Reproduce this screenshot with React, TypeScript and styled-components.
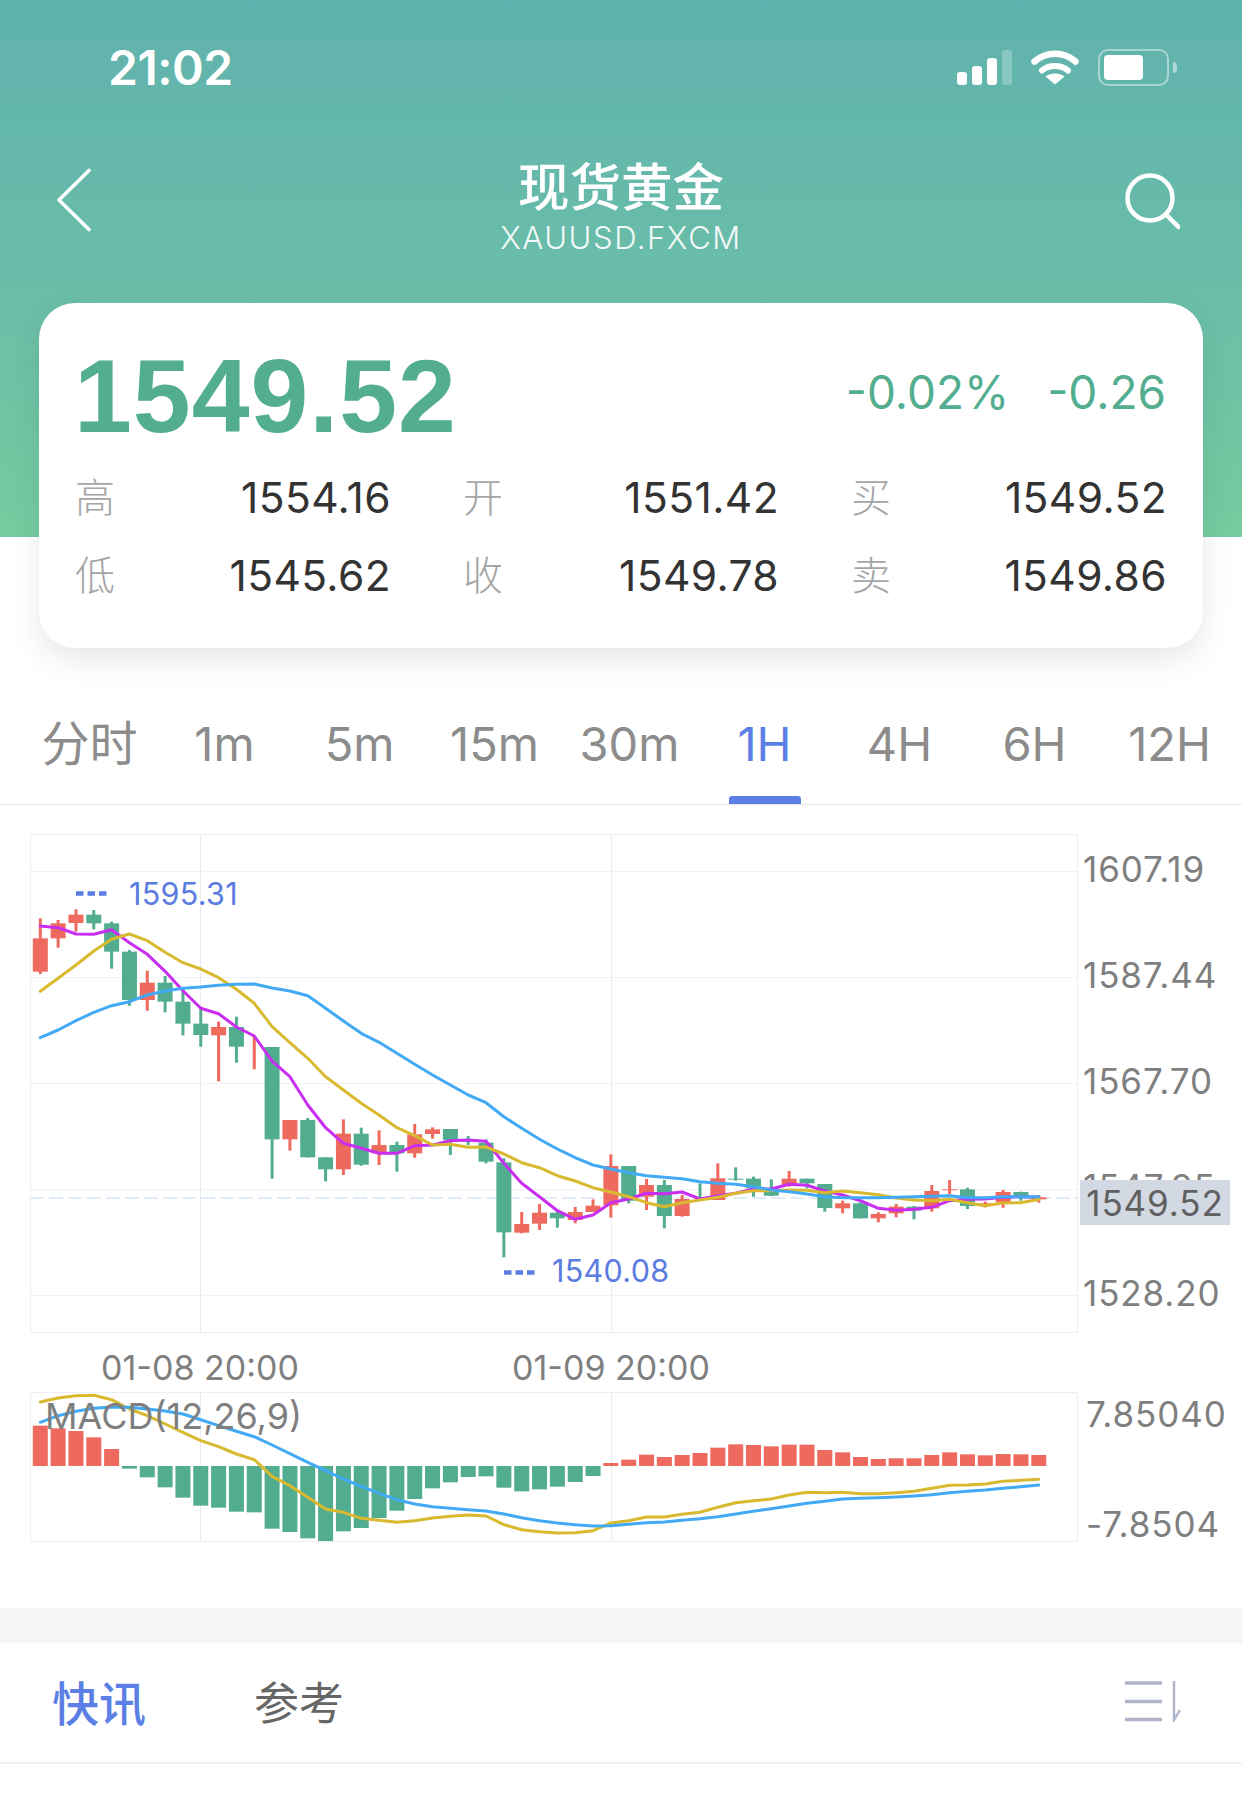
import React from 'react'
import styled, { createGlobalStyle } from 'styled-components'

const UP = '#ee6a5e'
const DOWN = '#51ac90'
const CANDLE_STEP = 17.83
const CANDLE_FIRST = 40.3

const candleX = (i: number) => CANDLE_FIRST + CANDLE_STEP * i

// [wick top, body top, body bottom, wick bottom, colour], read off the 3x crops
type Candle = [number, number, number, number, 'r' | 'g']

const CANDLES_A: Candle[] = [
  [265, 325, 425, 432, 'r'],
  [270, 280, 325, 353, 'r'],
  [238, 254, 279, 305, 'r'],
  [240, 254, 280, 298, 'g'],
  [275, 280, 365, 416, 'g'],
  [360, 365, 510, 527, 'g'],
  [422, 458, 510, 542, 'r'],
  [438, 458, 515, 547, 'g'],
  [475, 515, 581, 616, 'g'],
  [530, 581, 615, 650, 'g'],
  [575, 591, 616, 754, 'r'],
  [560, 591, 650, 698, 'g'],
  [618, 660, 660, 718, 'r'],
  [651, 651, 928, 1046, 'g'],
  [870, 870, 928, 962, 'r'],
  [864, 870, 982, 982, 'g'],
  [982, 982, 1018, 1054, 'g'],
  [868, 911, 1018, 1035, 'r'],
  [893, 911, 1004, 1007, 'g'],
  [901, 945, 970, 1005, 'r'],
  [935, 945, 970, 1025, 'g'],
  [882, 913, 970, 983, 'r'],
  [892, 898, 912, 926, 'r'],
]

const CANDLES_B: Candle[] = [
  [147, 147, 180, 225, 'g'],
  [168, 180, 185, 195, 'g'],
  [178, 188, 245, 250, 'g'],
  [235, 247, 457, 532, 'g'],
  [396, 432, 458, 460, 'r'],
  [372, 398, 431, 450, 'r'],
  [396, 398, 415, 443, 'g'],
  [381, 396, 420, 430, 'r'],
  [358, 377, 396, 396, 'r'],
  [223, 258, 376, 413, 'r'],
  [258, 258, 362, 370, 'g'],
  [297, 315, 350, 390, 'r'],
  [300, 315, 408, 445, 'g'],
  [345, 357, 408, 410, 'r'],
  [310, 355, 355, 355, 'g'],
  [250, 295, 360, 360, 'r'],
  [262, 296, 297, 302, 'g'],
  [290, 296, 325, 350, 'g'],
  [298, 325, 347, 348, 'g'],
  [273, 296, 315, 320, 'r'],
  [296, 296, 310, 325, 'g'],
  [312, 312, 384, 395, 'g'],
  [362, 370, 385, 400, 'r'],
  [367, 370, 415, 415, 'g'],
  [397, 402, 415, 427, 'r'],
  [372, 380, 400, 412, 'r'],
  [378, 380, 392, 418, 'g'],
  [315, 333, 385, 395, 'r'],
  [300, 328, 331, 342, 'r'],
  [323, 328, 378, 387, 'g'],
  [365, 370, 377, 382, 'r'],
  [330, 336, 367, 383, 'r'],
  [335, 336, 352, 362, 'g'],
  [345, 353, 358, 368, 'r'],
]

const toRealY = (top: number, values: number[]) => values.map((v) => top + v / 3)

const MA5 = [
  ...toRealY(830, [288, 293, 312, 313, 299, 338, 373, 424, 482, 535, 551, 591, 618, 693, 740, 825, 893, 940, 955, 970, 970, 947, 945]),
  ...toRealY(1080, [182, 180, 184, 250, 310, 350, 392, 418, 405, 368, 357, 340, 341, 336, 357, 347, 340, 327, 327, 313, 316, 333, 345, 362, 385, 391, 388, 382, 362, 358, 357, 352, 350, 352]),
]

const MA10 = [
  ...toRealY(830, [484, 445, 405, 363, 328, 312, 332, 367, 398, 417, 443, 478, 520, 590, 638, 685, 740, 780, 820, 855, 893, 917, 945]),
  ...toRealY(1080, [193, 202, 201, 222, 248, 263, 287, 303, 323, 336, 350, 368, 380, 368, 360, 352, 340, 332, 332, 330, 331, 338, 333, 338, 344, 354, 360, 362, 358, 368, 377, 369, 368, 358]),
]

const MA20 = [
  ...toRealY(830, [623, 600, 572, 547, 527, 515, 495, 483, 475, 471, 466, 463, 462, 474, 483, 497, 535, 573, 610, 637, 670, 703, 735]),
  ...toRealY(1080, [15, 45, 68, 110, 145, 178, 207, 233, 255, 267, 278, 287, 292, 296, 305, 310, 313, 320, 330, 335, 342, 350, 353, 353, 353, 352, 350, 349, 347, 353, 353, 350, 350, 350]),
]

const DEA = toRealY(1370, [99, 87, 80, 79, 92, 120, 140, 165, 190, 215, 233, 255, 272, 322, 350, 385, 420, 430, 448, 454, 460, 455, 447, 442, 438, 441, 467, 482, 488, 492, 491, 485, 462, 455, 444, 444, 436, 430, 415, 401, 395, 390, 378, 370, 371, 370, 374, 374, 371, 367, 358, 349, 348, 345, 337, 334, 331])

const DIF = toRealY(1370, [160, 140, 127, 118, 114, 115, 120, 126, 135, 152, 170, 187, 203, 228, 254, 280, 305, 330, 352, 373, 392, 405, 413, 418, 422, 426, 435, 446, 455, 462, 467, 471, 470, 466, 461, 459, 454, 449, 443, 435, 427, 419, 411, 403, 397, 390, 388, 386, 384, 381, 377, 371, 367, 363, 358, 353, 348])

const MACD_BASE = 291
const MACD_BARS = [
  170, 178, 186, 205, 240,
  299, 325, 355, 386, 410, 416, 428, 430, 479, 489, 508, 516, 487, 477, 447, 425, 390, 358, 340, 324, 322, 356, 367, 361, 353, 339, 321,
  282, 272, 257, 264, 258, 252, 236, 226, 228, 232, 227, 227, 243, 250, 264, 270, 268, 268, 258, 250, 256, 259, 255, 256, 258,
]

const TABS = ['分时', '1m', '5m', '15m', '30m', '1H', '4H', '6H', '12H']

const STATS = [
  ['高', '1554.16', '开', '1551.42', '买', '1549.52'],
  ['低', '1545.62', '收', '1549.78', '卖', '1549.86'],
]

const PRICE_TICKS = ['1607.19', '1587.44', '1567.70', '1547.95', '1528.20']

const toPoints = (ys: number[]) => ys.map((y, i) => `${candleX(i).toFixed(1)},${y.toFixed(1)}`).join(' ')

const GlobalStyle = createGlobalStyle`
  html, body {
    margin: 0;
    padding: 0;
    background: #fff;
  }
  body {
    font-family: Inter, "Noto Sans CJK SC", sans-serif;
  }
`

const Page = styled.div`
  width: 1242px;
  height: 1820px;
  overflow: hidden;
  background: #fff;
`

const Hero = styled.header`
  height: 537px;
  background: linear-gradient(180deg, #60b2ae 0%, #6abea8 55%, #76cb9f 100%);
  color: #fff;
`

const StatusBar = styled.div`
  height: 134px;
  display: flex;
  align-items: center;
  justify-content: space-between;
  padding: 0 64px 0 108px;
`

const Clock = styled.span`
  font-size: 48px;
  font-weight: 600;
  letter-spacing: -0.5px;
`

const StatusIcons = styled.div`
  display: flex;
  align-items: center;
  gap: 19px;
`

const Signal = styled.div`
  display: flex;
  align-items: flex-end;
  gap: 5px;
  height: 35px;
`

const SignalBar = styled.i<{ $h: number; $off?: boolean }>`
  width: 10px;
  height: ${(p) => p.$h}px;
  border-radius: 3px;
  background: ${(p) => (p.$off ? 'rgba(255,255,255,.25)' : '#fff')};
`

const Battery = styled.div`
  position: relative;
  box-sizing: border-box;
  width: 71px;
  height: 37px;
  padding: 4px;
  margin-right: 9px;
  border: 2px solid rgba(255, 255, 255, 0.45);
  border-radius: 10px;
  &::after {
    content: '';
    position: absolute;
    left: 73px;
    top: 11px;
    width: 4px;
    height: 11px;
    border-radius: 0 4px 4px 0;
    background: rgba(255, 255, 255, 0.5);
  }
`

const BatteryLevel = styled.div`
  width: 39px;
  height: 25px;
  border-radius: 4px;
  background: #fff;
`

const NavBar = styled.nav`
  display: grid;
  grid-template-columns: 1fr auto 1fr;
  align-items: start;
  padding: 0 55px;
`

const BackIcon = styled.svg`
  display: block;
  margin-top: 33px;
`

const SearchIcon = styled.svg`
  display: block;
  justify-self: end;
  margin: 36px 7px 0 0;
`

const TitleBlock = styled.div`
  padding-top: 13px;
  text-align: center;
`

const Title = styled.h1`
  margin: 0;
  font-family: "Noto Sans CJK SC", sans-serif;
  font-size: 51.5px;
  line-height: 74px;
  font-weight: 500;
`

const Symbol = styled.div`
  font-size: 31px;
  line-height: 36px;
  margin-top: -1px;
  font-weight: 300;
  letter-spacing: 1.6px;
  opacity: 0.92;
`

const QuoteCard = styled.section`
  position: relative;
  box-sizing: border-box;
  width: 1164px;
  height: 345px;
  margin: -234px 0 0 39px;
  padding: 0 36px;
  background: #fff;
  border-radius: 36px;
  box-shadow: 0 12px 30px rgba(50, 70, 70, 0.12);
`

const QuoteHead = styled.div`
  box-sizing: border-box;
  display: flex;
  align-items: center;
  justify-content: space-between;
  height: 154px;
  padding-top: 29px;
`

const LastPrice = styled.div`
  margin: 3px 0 0 -1px;
  font-family: "Liberation Sans", sans-serif;
  font-size: 104px;
  font-weight: 700;
  color: #53ae90;
  letter-spacing: 1px;
`

const Change = styled.div`
  display: flex;
  gap: 38px;
  margin: -6px 1px 0 0;
  font-size: 46px;
  color: #53ae90;
`

const StatRow = styled.div`
  display: grid;
  grid-template-columns: 316px 72px 316px 72px 316px;
  height: 78px;
  align-items: center;
`

const StatCell = styled.div`
  display: flex;
  align-items: center;
  justify-content: space-between;
`

const StatLabel = styled.span`
  margin-top: -3px;
  font-family: "Noto Sans CJK SC", sans-serif;
  font-size: 40px;
  font-weight: 300;
  color: #a5a5a5;
`

const StatValue = styled.span`
  margin-top: 2px;
  font-size: 42.5px;
  letter-spacing: 0.4px;
  color: #333;
`

const PeriodTabs = styled.div`
  display: grid;
  grid-template-columns: repeat(9, 135px);
  height: 156px;
  padding-left: 22px;
  border-bottom: 1px solid #e6e7e9;
`

const PeriodTab = styled.div<{ $active?: boolean; $cjk?: boolean }>`
  position: relative;
  padding-top: 65px;
  text-align: center;
  font-size: ${(p) => (p.$cjk ? 48 : 47)}px;
  line-height: 62px;
  white-space: nowrap;
  color: ${(p) => (p.$active ? '#5b7fe5' : '#8c8c8c')};
  &::after {
    content: '';
    display: ${(p) => (p.$active ? 'block' : 'none')};
    position: absolute;
    left: 32px;
    bottom: 0;
    width: 72px;
    height: 8px;
    border-radius: 3px 3px 0 0;
    background: #5b7fe5;
  }
`

const ChartRow = styled.div`
  display: flex;
  padding-left: 30px;
`

const PriceRow = styled(ChartRow)`
  margin-top: 29px;
`

const Plot = styled.div<{ $h: number }>`
  position: relative;
  box-sizing: border-box;
  flex: none;
  width: 1048px;
  height: ${(p) => p.$h}px;
  border: 1px solid #eceef1;
`

const PlotSvg = styled.svg`
  position: absolute;
  left: -1px;
  top: -1px;
  display: block;
`

const PeakLabel = styled.div<{ $x: number; $y: number }>`
  position: absolute;
  left: ${(p) => p.$x}px;
  top: ${(p) => p.$y}px;
  font-size: 30.5px;
  line-height: 36px;
  letter-spacing: 0.3px;
  color: #5b7ce0;
  white-space: nowrap;
`

const MacdLabel = styled.div`
  position: absolute;
  left: 14px;
  top: 2px;
  font-size: 36px;
  line-height: 42px;
  color: #7f7f7f;
  white-space: nowrap;
`

const PriceAxis = styled.div`
  position: relative;
  flex: 1;
  height: 498px;
  margin-top: -18px;
`

const PriceTick = styled.div`
  height: 106px;
  line-height: 106px;
  padding-left: 5px;
  font-size: 35px;
  letter-spacing: 0.9px;
  color: #7f7f7f;
`

const LastTag = styled.div`
  position: absolute;
  left: 2px;
  top: 364px;
  width: 150px;
  height: 45px;
  line-height: 46px;
  text-align: center;
  font-size: 35px;
  letter-spacing: 0.9px;
  color: #606060;
  background: #d3d9e3;
`

const TimeAxis = styled.div`
  display: flex;
  gap: 215px;
  height: 59px;
  padding: 15px 0 0 102px;
  box-sizing: border-box;
`

const TimeTick = styled.span`
  width: 196px;
  display: flex;
  justify-content: center;
  font-size: 34px;
  line-height: 40px;
  color: #7f7f7f;
  white-space: nowrap;
`

const MacdAxis = styled.div`
  display: flex;
  flex-direction: column;
  justify-content: space-between;
  height: 154px;
  margin-bottom: -4px;
  padding-left: 8px;
  font-size: 35px;
  letter-spacing: 0.9px;
  line-height: 44px;
  color: #7f7f7f;
`

const Divider = styled.div`
  height: 35px;
  margin-top: 66px;
  background: #f4f5f7;
`

const NewsTabs = styled.div`
  box-sizing: border-box;
  display: flex;
  align-items: center;
  height: 121px;
  padding: 0 60px 4px 52px;
  border-bottom: 2px solid #f0f1f3;
  font-family: "Noto Sans CJK SC", sans-serif;
`

const NewsTab = styled.span<{ $active?: boolean }>`
  font-size: ${(p) => (p.$active ? 47 : 45)}px;
  font-weight: ${(p) => (p.$active ? 500 : 400)};
  color: ${(p) => (p.$active ? '#5b7fe5' : '#666')};
  margin-right: ${(p) => (p.$active ? 108 : 0)}px;
`

const FilterIcon = styled.svg`
  display: block;
  margin-left: auto;
`

const WifiIcon = () => (
  <svg width="48" height="36" viewBox="0 0 48 36">
    <path d="M3.5 12.5C15 2 33 2 44.5 12.5" fill="none" stroke="#fff" strokeWidth="6.5" strokeLinecap="round" />
    <path d="M11 21.5C18 15.5 30 15.5 37 21.5" fill="none" stroke="#fff" strokeWidth="6" strokeLinecap="round" />
    <path d="M24 35.5L14.5 27.5C19 23.5 29 23.5 33.5 27.5Z" fill="#fff" />
  </svg>
)

const CandleMark = ({ x, candle, top }: { x: number; candle: Candle; top: number }) => {
  const [wickTop, bodyTop, bodyBottom, wickBottom, kind] = candle
  const fill = kind === 'r' ? UP : DOWN
  return (
    <g fill={fill}>
      <rect x={x - 1.5} y={top + wickTop / 3} width="3" height={(wickBottom - wickTop) / 3} />
      {bodyBottom > bodyTop && (
        <rect x={x - 7.5} y={top + bodyTop / 3} width="15" height={Math.max((bodyBottom - bodyTop) / 3, 1)} />
      )}
    </g>
  )
}

const Line = ({ ys, color }: { ys: number[]; color: string }) => (
  <polyline points={toPoints(ys)} fill="none" stroke={color} strokeWidth="3" strokeLinejoin="round" strokeLinecap="round" />
)

const PriceChart = () => (
  <PlotSvg width="1048" height="499" viewBox="30 834 1048 499">
    {[871.5, 977.5, 1083.5, 1189.5, 1295.5].map((y) => (
      <line key={y} x1="30" x2="1078" y1={y} y2={y} stroke="#f1f2f4" />
    ))}
    {[200.5, 611.5].map((x) => (
      <line key={x} x1={x} x2={x} y1="834" y2="1333" stroke="#e9ebee" />
    ))}
    <line x1="30" x2="1078" y1="1198" y2="1198" stroke="#c5dbf2" strokeDasharray="14 5" />
    {CANDLES_A.map((c, i) => (
      <CandleMark key={i} x={candleX(i)} candle={c} top={830} />
    ))}
    {CANDLES_B.map((c, i) => (
      <CandleMark key={i} x={candleX(i + 23)} candle={c} top={1080} />
    ))}
    <line x1={candleX(56)} x2={candleX(56) + 8} y1="1198" y2="1198" stroke={UP} />
    <Line ys={MA5} color="#c92ef0" />
    <Line ys={MA10} color="#d9b92f" />
    <Line ys={MA20} color="#42aaf5" />
    <line x1="76" x2="107" y1="893.5" y2="893.5" stroke="#5b7ce0" strokeWidth="4.5" strokeDasharray="7.5 4" />
    <line x1="504" x2="535" y1="1272.5" y2="1272.5" stroke="#5b7ce0" strokeWidth="4.5" strokeDasharray="7.5 4" />
  </PlotSvg>
)

const MacdChart = () => (
  <PlotSvg width="1048" height="150" viewBox="30 1393 1048 150">
    {[200.5, 611.5].map((x) => (
      <line key={x} x1={x} x2={x} y1="1393" y2="1542" stroke="#e9ebee" />
    ))}
    {MACD_BARS.map((v, i) => {
      const up = v < MACD_BASE
      const y = 1370 + Math.min(v, MACD_BASE) / 3
      const h = Math.abs(v - MACD_BASE) / 3
      return <rect key={i} x={candleX(i) - 7.5} y={y} width="15" height={h} fill={up ? UP : DOWN} />
    })}
    <Line ys={DEA} color="#d9b92f" />
    <Line ys={DIF} color="#42aaf5" />
  </PlotSvg>
)

export default function App() {
  return (
    <Page>
      <GlobalStyle />
      <Hero>
        <StatusBar>
          <Clock>21:02</Clock>
          <StatusIcons>
            <Signal>
              <SignalBar $h={13} />
              <SignalBar $h={19} />
              <SignalBar $h={27} />
              <SignalBar $h={35} $off />
            </Signal>
            <WifiIcon />
            <Battery>
              <BatteryLevel />
            </Battery>
          </StatusIcons>
        </StatusBar>
        <NavBar>
          <BackIcon width="38" height="66" viewBox="0 0 38 66">
            <path d="M34 3.5L4 33L34 62.5" fill="none" stroke="#fff" strokeWidth="3.6" strokeLinecap="round" strokeLinejoin="round" />
          </BackIcon>
          <TitleBlock>
            <Title>现货黄金</Title>
            <Symbol>XAUUSD.FXCM</Symbol>
          </TitleBlock>
          <SearchIcon width="56" height="62" viewBox="0 0 56 62">
            <circle cx="26" cy="28" r="22.5" fill="none" stroke="#fff" strokeWidth="4.5" />
            <path d="M42.5 45L54.5 57" fill="none" stroke="#fff" strokeWidth="4.5" strokeLinecap="round" />
          </SearchIcon>
        </NavBar>
      </Hero>
      <QuoteCard>
        <QuoteHead>
          <LastPrice>1549.52</LastPrice>
          <Change>
            <span>-0.02%</span>
            <span>-0.26</span>
          </Change>
        </QuoteHead>
        {STATS.map((row) => (
          <StatRow key={row[0]}>
            <StatCell>
              <StatLabel>{row[0]}</StatLabel>
              <StatValue>{row[1]}</StatValue>
            </StatCell>
            <span />
            <StatCell>
              <StatLabel>{row[2]}</StatLabel>
              <StatValue>{row[3]}</StatValue>
            </StatCell>
            <span />
            <StatCell>
              <StatLabel>{row[4]}</StatLabel>
              <StatValue>{row[5]}</StatValue>
            </StatCell>
          </StatRow>
        ))}
      </QuoteCard>
      <PeriodTabs>
        {TABS.map((tab) => (
          <PeriodTab key={tab} $active={tab === '1H'} $cjk={tab === '分时'}>
            {tab}
          </PeriodTab>
        ))}
      </PeriodTabs>
      <PriceRow>
        <Plot $h={499}>
          <PriceChart />
          <PeakLabel $x={98} $y={41}>1595.31</PeakLabel>
          <PeakLabel $x={521} $y={418}>1540.08</PeakLabel>
        </Plot>
        <PriceAxis>
          {PRICE_TICKS.map((tick) => (
            <PriceTick key={tick}>{tick}</PriceTick>
          ))}
          <LastTag>1549.52</LastTag>
        </PriceAxis>
      </PriceRow>
      <TimeAxis>
        <TimeTick>01-08 20:00</TimeTick>
        <TimeTick>01-09 20:00</TimeTick>
      </TimeAxis>
      <ChartRow>
        <Plot $h={150}>
          <MacdChart />
          <MacdLabel>MACD(12,26,9)</MacdLabel>
        </Plot>
        <MacdAxis>
          <span>7.85040</span>
          <span>-7.8504</span>
        </MacdAxis>
      </ChartRow>
      <Divider />
      <NewsTabs>
        <NewsTab $active>快讯</NewsTab>
        <NewsTab>参考</NewsTab>
        <FilterIcon width="58" height="42" viewBox="0 0 58 42">
          <path d="M1 3h37M1 21.5h37M1 39.5h37" fill="none" stroke="#b0b4cb" strokeWidth="3.4" />
          <path d="M50 1V40L56 30" fill="none" stroke="#b0b4cb" strokeWidth="2.4" />
        </FilterIcon>
      </NewsTabs>
    </Page>
  )
}
